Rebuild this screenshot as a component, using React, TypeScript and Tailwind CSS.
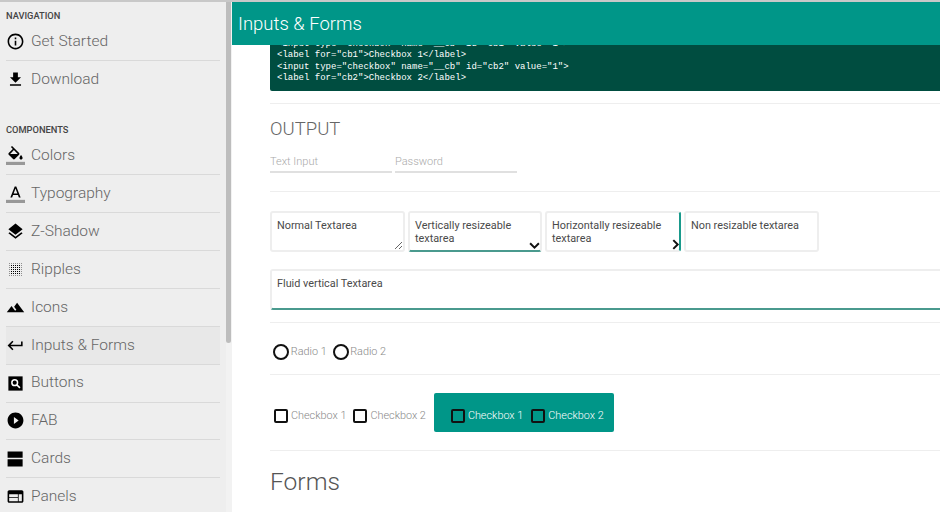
import React from "react";
import {
  MdInfoOutline, MdFileDownload, MdLayers,
  MdTerrain, MdKeyboardReturn, MdPlayCircleFilled, MdWeb,
} from "react-icons/md";

type IconProps = { className?: string };

function RippleIcon({ className }: IconProps) {
  const dots: React.ReactNode[] = [];
  for (let x = 0; x < 7; x++)
    for (let y = 0; y < 7; y++) {
      const edge = x === 0 || y === 0 || x === 6 || y === 6;
      dots.push(<rect key={x + "-" + y} x={3 + x * 2} y={3 + y * 2} width={1} height={1} fill="#000" opacity={edge ? 0.4 : 1} />);
    }
  return <svg viewBox="0 0 19 19" className={className}>{dots}</svg>;
}

function FillIcon({ className }: IconProps) {
  return (
    <svg viewBox="0 0 24 24" className={className}>
      <path d="M16.56 8.94L7.62 0 6.21 1.41l2.38 2.38-5.15 5.15c-.59.59-.59 1.54 0 2.12l5.5 5.5c.29.29.68.44 1.06.44s.77-.15 1.06-.44l5.5-5.5c.59-.58.59-1.53 0-2.12zM5.21 10L10 5.21 14.79 10H5.21zM19 11.5s-2 2.17-2 3.5c0 1.1.9 2 2 2s2-.9 2-2c0-1.33-2-3.5-2-3.5z" fill="#000" />
      <path d="M0 20h24v4H0z" fill="#000" fillOpacity=".36" />
    </svg>
  );
}

function TextIcon({ className }: IconProps) {
  return (
    <svg viewBox="0 0 24 24" className={className}>
      <path d="M11 3L5.5 17h2.25l1.12-3h6.25l1.12 3h2.25L13 3h-2zm-1.38 9L12 5.67 14.38 12H9.62z" fill="#000" />
      <path d="M0 20h24v4H0z" fill="#000" fillOpacity=".36" />
    </svg>
  );
}

function SearchBoxIcon({ className }: IconProps) {
  return (
    <svg viewBox="0 0 24 24" className={className}>
      <path d="M3 3h18v18H3z" fill="#000" />
      <circle cx="11" cy="11" r="3.6" fill="none" stroke="#fff" strokeWidth="1.9" />
      <path d="M13.6 13.6l4 4" stroke="#fff" strokeWidth="2" />
    </svg>
  );
}

function CardsIcon({ className }: IconProps) {
  return (
    <svg viewBox="0 0 24 24" className={className}>
      <path d="M2 3h19v8.2H2zM2 13h19v9H2z" fill="#000" />
    </svg>
  );
}

type Item = { label: string; Icon: React.ComponentType<IconProps>; active?: boolean; last?: boolean; short?: boolean };

const nav: Item[] = [
  { label: "Get Started", Icon: MdInfoOutline, short: true },
  { label: "Download", Icon: MdFileDownload, last: true, short: true },
];
const comps: Item[] = [
  { label: "Colors", Icon: FillIcon },
  { label: "Typography", Icon: TextIcon },
  { label: "Z-Shadow", Icon: MdLayers },
  { label: "Ripples", Icon: RippleIcon },
  { label: "Icons", Icon: MdTerrain },
  { label: "Inputs & Forms", Icon: MdKeyboardReturn, active: true },
  { label: "Buttons", Icon: SearchBoxIcon },
  { label: "FAB", Icon: MdPlayCircleFilled },
  { label: "Cards", Icon: CardsIcon },
  { label: "Panels", Icon: MdWeb },
];

function NavRow({ item }: { item: Item }) {
  const { Icon } = item;
  return (
    <div className={`flex shrink-0 items-center gap-[6px] ${item.short ? "h-[37.5px]" : "h-[37.9px]"} ${item.last ? "" : "border-b border-[#d9d9d9]"} ${item.active ? "bg-[#e8e8e8]" : ""}`}>
      <Icon className="h-[19px] w-[19px] shrink-0 text-black" />
      <span className="text-[15.5px] font-light text-[#666]">{item.label}</span>
    </div>
  );
}

function Heading({ children, className }: { children: React.ReactNode; className: string }) {
  return <div className={`text-[9.3px] font-medium leading-[12px] text-[#444] ${className}`}>{children}</div>;
}

function Divider({ className }: { className: string }) {
  return <hr className={`border-0 border-t border-[#eeeeee] ${className}`} />;
}

function Choice({ label, round, light }: { label: string; round?: boolean; light?: boolean }) {
  return (
    <label className={`flex items-center ${round ? "gap-[1.5px]" : "gap-[3px]"}`}>
      <span className={`block border-2 border-[#111] ${round ? "h-[16px] w-[16px] rounded-full" : "h-[14px] w-[14px] rounded-[2px]"}`} />
      <span className={`text-[10.85px] font-light ${light ? "text-white" : "text-[#888]"}`}>{label}</span>
    </label>
  );
}

const areaBase = "block rounded-[3px] border-2 border-[#eeeeee] bg-white px-[5px] pt-[6px] text-[10.85px] leading-[13px] text-[#4a4a4a] outline-none";

export default function App() {
  return (
    <div className="flex h-[512px] w-[940px] flex-col overflow-hidden bg-white font-['Roboto',sans-serif]">
      <div className="h-[2px] shrink-0 bg-[#c8c8c8]" />
      <div className="flex min-h-0 flex-1">
        <aside className="w-[226px] shrink-0 overflow-hidden bg-[#eeeeee] pl-[6px] pr-[6px]">
          <Heading className="pt-[8px]">NAVIGATION</Heading>
          <div className="mt-[1.5px]">
            {nav.map((i) => <NavRow key={i.label} item={i} />)}
          </div>
          <Heading className="mt-[25.2px]">COMPONENTS</Heading>
          <div className="mt-[1.6px]">
            {comps.map((i) => <NavRow key={i.label} item={i} />)}
          </div>
        </aside>
        <div className="w-[6px] shrink-0 bg-[#f2f2f2]">
          <div className="h-[341px] w-[5px] rounded-b-[3px] bg-[#bdbdbd]" />
        </div>
        <main className="min-w-0 flex-1 overflow-hidden">
          <header className="flex h-[43px] items-center bg-[#009688] pl-[6px] pt-[2px] text-[18.5px] font-light text-white">Inputs &amp; Forms</header>
          <div className="pl-[38px]">
            <pre className="flex h-[46px] flex-col justify-end overflow-hidden rounded-bl-[2px] bg-[#004d40] pb-[6px] pl-[7px] font-['Liberation_Mono',monospace] text-[9px] leading-[11.6px] text-white">
              <code>{`<input type="checkbox" name="__cb" id="cb1" value="1">`}</code>
              <code>{`<label for="cb1">Checkbox 1</label>`}</code>
              <code>{`<input type="checkbox" name="__cb" id="cb2" value="1">`}</code>
              <code>{`<label for="cb2">Checkbox 2</label>`}</code>
            </pre>
            <Divider className="mt-[12px]" />
            <h2 className="mt-[14px] text-[18.5px] font-light leading-[22px] text-[#666]">OUTPUT</h2>
            <div className="mt-[11px] flex gap-[3px]">
              <input placeholder="Text Input" className="h-[22px] w-[122px] border-b-2 border-[#e0e0e0] text-[11px] font-light outline-none placeholder:text-[#aaa]" />
              <input placeholder="Password" className="h-[22px] w-[122px] border-b-2 border-[#e0e0e0] text-[11px] font-light outline-none placeholder:text-[#aaa]" />
            </div>
            <Divider className="mt-[18px]" />
            <div className="mt-[19px] flex">
              <textarea readOnly defaultValue="Normal Textarea" className={`${areaBase} h-[41px] w-[135px] resize`} />
              <div className="relative ml-[3px]">
                <textarea readOnly defaultValue="Vertically resizeable textarea" className={`${areaBase} h-[41px] w-[134px] resize-none border-b-[#4a9a8e]`} />
                <svg viewBox="0 0 10 10" className="absolute bottom-[1px] right-[2px] h-[11px] w-[11px]"><path d="M1 3l4 4 4-4" fill="none" stroke="#111" strokeWidth="1.8" /></svg>
              </div>
              <div className="relative ml-[3px]">
                <textarea readOnly defaultValue="Horizontally resizeable textarea" className={`${areaBase} h-[41px] w-[136px] resize-none border-r-[#1a9a8c]`} />
                <svg viewBox="0 0 10 10" className="absolute bottom-[2px] right-[0px] h-[11px] w-[11px]"><path d="M3 1l4 4-4 4" fill="none" stroke="#111" strokeWidth="1.8" /></svg>
              </div>
              <textarea readOnly defaultValue="Non resizable textarea" className={`${areaBase} ml-[3px] h-[41px] w-[135px] resize-none`} />
            </div>
            <textarea readOnly defaultValue="Fluid vertical Textarea" className={`${areaBase} mt-[17px] h-[41px] w-[680px] resize-none border-b-[#4a9a8e] pt-[4px]`} />
            <Divider className="mt-[12px]" />
            <div className="mt-[20px] flex h-[18px] items-center gap-[6px] pl-[3.3px]">
              <Choice round label="Radio 1" />
              <Choice round label="Radio 2" />
            </div>
            <Divider className="mt-[13px]" />
            <div className="mt-[18px] flex items-start gap-[8px] pl-[4px]">
              <div className="flex h-[39px] items-center gap-[7px] pt-[7px]">
                <Choice label="Checkbox 1" />
                <Choice label="Checkbox 2" />
              </div>
              <div className="flex h-[39px] w-[180px] items-center gap-[8px] rounded-[2px] bg-[#009688] pl-[17px] pt-[7px]">
                <Choice light label="Checkbox 1" />
                <Choice light label="Checkbox 2" />
              </div>
            </div>
            <Divider className="mt-[18px]" />
            <h2 className="mt-[16px] text-[24.6px] font-light leading-[29px] text-[#555]">Forms</h2>
          </div>
        </main>
      </div>
    </div>
  );
}
